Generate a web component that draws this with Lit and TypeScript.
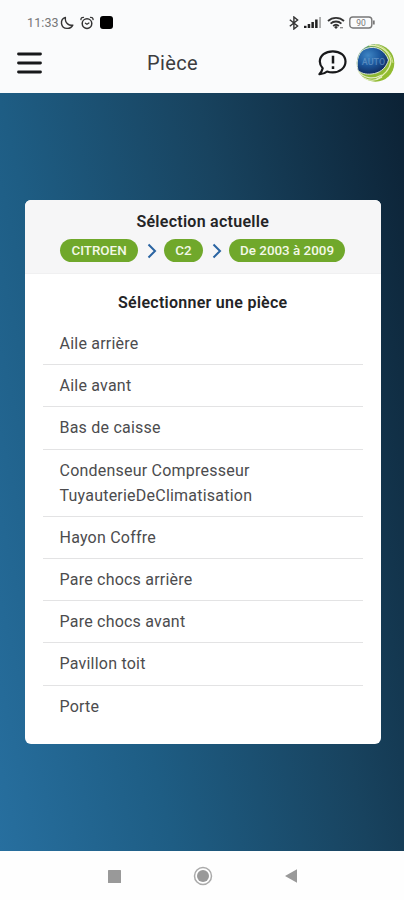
import { LitElement, html, css } from "lit";
import { customElement } from "lit/decorators.js";

const SELECTION = ["CITROEN", "C2", "De 2003 à 2009"];
const PARTS = [
  "Aile arrière",
  "Aile avant",
  "Bas de caisse",
  "Condenseur Compresseur TuyauterieDeClimatisation",
  "Hayon Coffre",
  "Pare chocs arrière",
  "Pare chocs avant",
  "Pavillon toit",
  "Porte",
];

@customElement("status-bar")
class StatusBar extends LitElement {
  static styles = css`
    :host {
      display: flex;
      justify-content: space-between;
      align-items: center;
      box-sizing: border-box;
      height: 45px;
      padding: 0 28px 0 27px;
      font-size: 12.5px;
      color: #777;
    }
    .group {
      display: flex;
      align-items: center;
    }
    .time {
      letter-spacing: 0.1px;
      width: 33px;
      white-space: nowrap;
    }
    svg {
      display: block;
    }
    .alarm {
      margin-left: 6px;
    }
    .app {
      width: 12.5px;
      height: 12.5px;
      margin-left: 6px;
      border-radius: 3px;
      background: #000;
    }
    .signal {
      margin-left: 4px;
    }
    .wifi {
      margin-left: 5px;
    }
    .battery {
      margin-left: 4px;
    }
  `;
  render() {
    return html`
      <div class="group">
        <span class="time">11:33</span>
        <svg width="14" height="14" viewBox="0 0 14 14" fill="none" stroke="#333" stroke-width="1.4" stroke-linejoin="round">
          <path d="M5.400 1.400C2.600 2.400 1.200 4.800 1.500 7.600c.5 3 2.900 4.900 5.800 4.800 2.600-.1 4.600-1.300 5.500-3.300C9.600 10 4.600 7.500 5.400 1.400Z" />
        </svg>
        <svg class="alarm" width="14" height="14" viewBox="0 0 14 14" fill="none" stroke="#333" stroke-width="1.5" stroke-linecap="round">
          <circle cx="7" cy="7.600" r="4.800" />
          <path d="M.9 3.600C1 2 2 1.200 3.500 1.300M13.100 3.600C13 2 12 1.200 10.500 1.300M5.400 7.200 7 8.200 8.900 7" stroke-width="1.300" />
        </svg>
        <span class="app"></span>
      </div>
      <div class="group">
        <svg width="10" height="14" viewBox="0 0 10 14" fill="none" stroke="#333" stroke-width="1.400">
          <path d="M.8 3.800 8.600 10 4.900 13V1l3.700 3L.8 10.200" />
        </svg>
        <svg class="signal" width="19" height="13" viewBox="0 0 19 13" fill="#222">
          <rect x="1" y="9.800" width="2.500" height="2.200" />
          <rect x="4.700" y="8" width="2.500" height="4" />
          <rect x="8.400" y="6" width="2.500" height="6" />
          <rect x="12.100" y="3.500" width="2.500" height="8.500" />
          <rect x="16.300" y="1" width="1.500" height="11" fill="#999" />
        </svg>
        <svg class="wifi" width="18" height="14" viewBox="0 0 18 14" fill="none" stroke="#333" stroke-width="1.800">
          <path d="M1 5C5.500.8 12.500.8 17 5M3.600 7.600c3-2.800 7.800-2.800 10.800 0M6.200 10c1.600-1.500 4-1.500 5.600 0" />
          <path d="m9 9.800 1.800 1.500L9 13l-1.800-1.700Z" fill="#333" stroke="none" />
          <path d="M13 11.700h3" stroke="#888" stroke-width="1.300" />
        </svg>
        <svg class="battery" width="27" height="13" viewBox="0 0 27 13">
          <rect x=".8" y="1" width="22" height="11" rx="3" fill="none" stroke="#777" stroke-width="1.400" />
          <path d="M24.800 4.500v4" stroke="#777" stroke-width="1.800" />
          <text x="12" y="9.600" font-size="8.500" text-anchor="middle" fill="#777">90</text>
        </svg>
      </div>
    `;
  }
}

@customElement("nav-bar")
class NavBar extends LitElement {
  static styles = css`
    :host {
      display: grid;
      grid-template-columns: 147px 1fr auto 39px;
      align-items: center;
      box-sizing: border-box;
      height: 48px;
      padding: 0 9px 12px 0;
      color: #3c3c3e;
      margin-top: -2px;
      margin-bottom: 2px;
    }
    svg {
      display: block;
    }
    .menu {
      margin-left: 16px;
    }
    .title {
      font-size: 20px;
      letter-spacing: 0.35px;
      white-space: nowrap;
    }
    .bubble {
      margin-right: 9px;
    }
  `;
  render() {
    return html`
      <svg class="menu" width="26" height="24" viewBox="0 0 26 24" stroke="#17181a" stroke-width="2.800" stroke-linecap="round">
        <path d="M2.500 3h22M2.500 12h22M2.500 21h22" />
      </svg>
      <span class="title">Pièce</span>
      <svg class="bubble" width="30" height="28" viewBox="0 0 30 28" fill="none" stroke="#17181a" stroke-width="2.200" stroke-linejoin="round">
        <path d="M15.800 2.300C8.400 2.300 2.800 6.700 2.800 12.600c0 2.600 1.100 4.800 2.900 6.600C5.300 21.400 3.900 23.400 2.400 25.200c3 .1 5.700-.9 7.700-2.700 1.700.6 3.700.9 5.700.9 7.300 0 12.700-4.700 12.700-10.800S23.100 2.300 15.800 2.300Z" />
        <path d="M16 6.800v7.800M16 17.300v2.700" stroke-width="2.500" />
      </svg>
      <svg width="39" height="40" viewBox="0 0 39 40">
        <defs>
          <radialGradient id="eye" cx=".35" cy=".3" r=".78">
            <stop offset="0" stop-color="#3f86c4" />
            <stop offset=".45" stop-color="#1d5aa0" />
            <stop offset="1" stop-color="#0e2455" />
          </radialGradient>
          <linearGradient id="ring" x1="0" y1="0" x2="1" y2="1">
            <stop offset="0" stop-color="#2f7f8c" />
            <stop offset=".35" stop-color="#86b23a" />
            <stop offset="1" stop-color="#98c02c" />
          </linearGradient>
        </defs>
        <circle cx="19.500" cy="20" r="18.800" fill="url(#ring)" />
        <path d="M13 2.500C24 1 33 8 35 18c-1 8-7 15-15 18.500" fill="none" stroke="#e6efb3" stroke-width="1.300" />
        <path d="M19 1.500C29 3 35.500 11 37 20" fill="none" stroke="#d6e692" stroke-width=".9" />
        <path d="M2.500 28.500C7 35 17 37 26 32M8 35c5 3 12 3 18-1" fill="none" stroke="#e4edc4" stroke-width="1.200" />
        <path d="M2 27.500C-.5 17 3 8 10 5.500 20 2 29 7 32.500 17c-2 7-7 12-14 13.500C12 32 6 31 2 27.500Z" fill="url(#eye)" stroke="#d9e4d8" stroke-width="1" />
        <text x="17.500" y="21.500" font-size="9" font-weight="500" text-anchor="middle" fill="#7fa9d2" opacity=".55">AUTO</text>
      </svg>
    `;
  }
}

@customElement("part-card")
class PartCard extends LitElement {
  static styles = css`
    :host {
      display: block;
      box-sizing: border-box;
      height: 544px;
      border-radius: 6px;
      overflow: hidden;
      background: #fff;
      color: #242426;
    }
    .current {
      box-sizing: border-box;
      height: 74px;
      padding-top: 11px;
      background: #f6f6f7;
      border-bottom: 1px solid #f0f0f1;
    }
    .heading {
      font-size: 16px;
      font-weight: 600;
      line-height: 22px;
      text-align: center;
      letter-spacing: 0.27px;
    }
    .crumbs {
      display: flex;
      justify-content: center;
      align-items: center;
      margin-top: 6px;
    }
    .pill {
      box-sizing: border-box;
      height: 23px;
      padding: 0 11px;
      border-radius: 12px;
      background: #70a82b;
      color: #f3f8e8;
      font-size: 13.4px;
      font-weight: 500;
      line-height: 23px;
      white-space: nowrap;
    }
    .arrow {
      display: block;
      margin: 0 7.5px 0 9px;
    }
    .choose {
      margin-top: 18px;
    }
    .list {
      list-style: none;
      margin: 9px 18px 0;
      padding: 0;
    }
    .item {
      padding: 8px 90px 8.2px 16.5px;
      border-bottom: 1px solid #e3e3e4;
      font-size: 16px;
      line-height: 25px;
      letter-spacing: 0.22px;
      color: #4c4c4e;
    }
    .item:last-child {
      border-bottom: none;
    }
  `;
  render() {
    return html`
      <div class="current">
        <div class="heading">Sélection actuelle</div>
        <div class="crumbs">
          ${SELECTION.map(
            (label, i) => html`${i
                ? html`<svg class="arrow" width="10" height="16" viewBox="0 0 10 16" fill="none" stroke="#2a64a2" stroke-width="2">
                    <path d="m1.500 1.500 6.500 6.500-6.500 6.500" />
                  </svg>`
                : null}<span class="pill">${label}</span>`
          )}
        </div>
      </div>
      <div class="heading choose">Sélectionner une pièce</div>
      <ul class="list">
        ${PARTS.map((part) => html`<li class="item">${part}</li>`)}
      </ul>
    `;
  }
}

@customElement("app-root")
class AppRoot extends LitElement {
  static styles = css`
    :host {
      display: flex;
      flex-direction: column;
      height: 900px;
      background: #fafbfc;
      font-family: Roboto, "Liberation Sans", sans-serif;
    }
    .content {
      flex: 1;
      box-sizing: border-box;
      padding: 107px 23.5px 0 25px;
      background: linear-gradient(77deg, #276f9f 0%, #1e5d84 30%, #18435f 64%, #0c2235 100%);
    }
    .system {
      display: flex;
      justify-content: center;
      align-items: center;
      gap: 72px;
      box-sizing: border-box;
      height: 49px;
      padding: 1px 0 0 1px;
      background: #fefefe;
    }
    .system svg {
      display: block;
    }
  `;
  render() {
    return html`
      <status-bar></status-bar>
      <nav-bar></nav-bar>
      <main class="content"><part-card></part-card></main>
      <footer class="system">
        <svg width="13" height="13" viewBox="0 0 13 13"><rect width="13" height="13" rx=".5" fill="#999" /></svg>
        <svg width="20" height="20" viewBox="0 0 20 20">
          <circle cx="10" cy="10" r="8.500" fill="none" stroke="#aaa" stroke-width="1.500" />
          <circle cx="10" cy="10" r="6" fill="#999" />
        </svg>
        <svg width="12" height="14" viewBox="0 0 12 14"><path d="M12 .3v13.400L0 7Z" fill="#999" /></svg>
      </footer>
    `;
  }
}
